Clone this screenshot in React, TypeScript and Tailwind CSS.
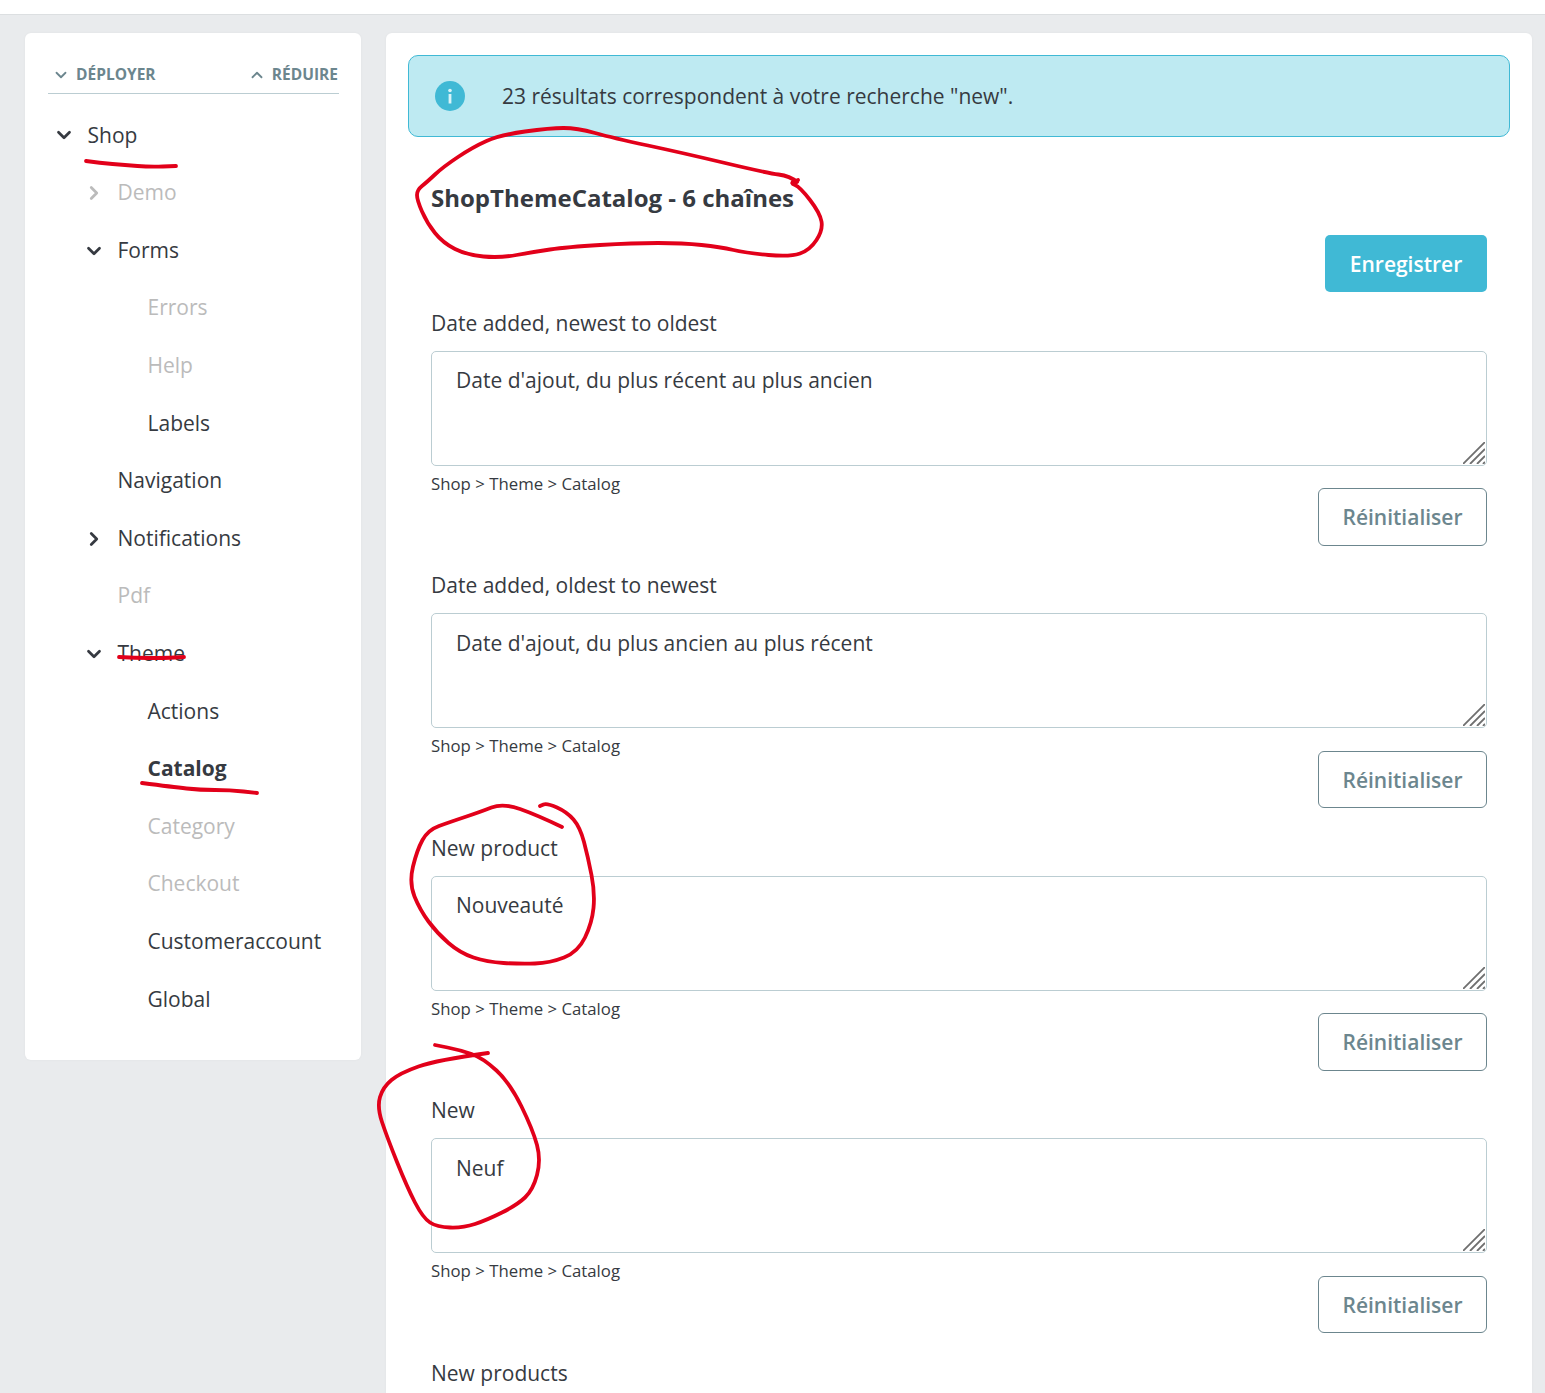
import React from 'react';
import { ChevronDown, ChevronRight, ChevronUp } from 'lucide-react';

type TreeItem = {
  label: string;
  indent: string;
  icon?: 'down' | 'right';
  muted?: boolean;
  active?: boolean;
};

const tree: TreeItem[] = [
  { label: 'Shop', indent: 'pl-0', icon: 'down' },
  { label: 'Demo', indent: 'pl-[30px]', icon: 'right', muted: true },
  { label: 'Forms', indent: 'pl-[30px]', icon: 'down' },
  { label: 'Errors', indent: 'pl-[60px]', muted: true },
  { label: 'Help', indent: 'pl-[60px]', muted: true },
  { label: 'Labels', indent: 'pl-[60px]' },
  { label: 'Navigation', indent: 'pl-[30px]' },
  { label: 'Notifications', indent: 'pl-[30px]', icon: 'right' },
  { label: 'Pdf', indent: 'pl-[30px]', muted: true },
  { label: 'Theme', indent: 'pl-[30px]', icon: 'down' },
  { label: 'Actions', indent: 'pl-[60px]' },
  { label: 'Catalog', indent: 'pl-[60px]', active: true },
  { label: 'Category', indent: 'pl-[60px]', muted: true },
  { label: 'Checkout', indent: 'pl-[60px]', muted: true },
  { label: 'Customeraccount', indent: 'pl-[60px]' },
  { label: 'Global', indent: 'pl-[60px]' },
];

const translations = [
  { label: 'Date added, newest to oldest', value: "Date d'ajout, du plus récent au plus ancien" },
  { label: 'Date added, oldest to newest', value: "Date d'ajout, du plus ancien au plus récent" },
  { label: 'New product', value: 'Nouveauté' },
  { label: 'New', value: 'Neuf' },
];

// pen marks drawn over the screenshot
const marks: [number, number][][] = [
  [[86, 161], [100, 163], [125, 165], [150, 167], [176, 166]],
  [[119, 657], [135, 658], [165, 658], [184, 657]],
  [[142, 783], [173, 787], [200, 790], [230, 790], [257, 793]],
  [
    [797, 182], [790, 176], [767, 173], [683, 153], [613, 138], [577, 128], [550, 128], [500, 135], [473, 147],
    [443, 167], [427, 182], [417, 190], [417, 200], [427, 223], [443, 243], [467, 255], [500, 258], [533, 252],
    [567, 247], [633, 243], [683, 243], [720, 247], [747, 253], [790, 257], [810, 250], [823, 230], [820, 213],
    [800, 187], [790, 183], [798, 180],
  ],
  [
    [562, 827], [537, 815], [503, 803], [480, 812], [450, 822], [428, 830], [417, 850], [409, 883], [420, 910],
    [437, 933], [460, 953], [487, 962], [520, 964], [550, 963], [578, 952], [592, 923], [595, 893], [588, 857],
    [580, 827], [567, 812], [547, 803], [540, 806],
  ],
  [
    [488, 1053], [437, 1060], [400, 1073], [383, 1087], [377, 1107], [387, 1137], [407, 1187], [423, 1218],
    [437, 1227], [463, 1228], [487, 1220], [517, 1205], [533, 1190], [541, 1160], [533, 1130], [510, 1083],
    [483, 1058], [460, 1050], [435, 1045],
  ],
];

const toPath = (pts: [number, number][]) => {
  let d = `M${pts[0][0]} ${pts[0][1]}`;
  for (let i = 1; i < pts.length - 1; i++) {
    const mx = (pts[i][0] + pts[i + 1][0]) / 2;
    const my = (pts[i][1] + pts[i + 1][1]) / 2;
    d += ` Q${pts[i][0]} ${pts[i][1]} ${mx} ${my}`;
  }
  const last = pts[pts.length - 1];
  return `${d} L${last[0]} ${last[1]}`;
};

const Sidebar = () => (
  <aside className="w-[336px] h-[1027px] shrink-0 bg-white rounded-[6px] pl-[23px] pr-[22px] pt-[24px] shadow-[0_0_3px_rgba(0,0,0,0.04)]">
    <div className="flex items-center justify-between h-[37px] border-b border-[#bbcdd2] pb-[1px] text-[#6c868e] text-[15.5px] font-bold uppercase">
      <div className="flex items-center">
        <ChevronDown className="w-[18px] h-[18px] ml-[4px] mr-[6px]" strokeWidth={2.4} />
        <span>Déployer</span>
      </div>
      <div className="flex items-center">
        <ChevronUp className="w-[18px] h-[18px] mr-[6px]" strokeWidth={2.4} />
        <span className="mr-px">Réduire</span>
      </div>
    </div>
    <ul className="mt-[12.6px]">
      {tree.map((item) => (
        <li key={item.label} className={`h-[57.6px] flex items-center ${item.indent}`}>
          <span className={`w-[39.5px] shrink-0 pl-[5px] ${item.muted ? 'text-[#bbbbbb]' : 'text-[#363a41]'}`}>
            {item.icon === 'down' && <ChevronDown className="w-[22px] h-[22px]" strokeWidth={3} />}
            {item.icon === 'right' && <ChevronRight className="w-[22px] h-[22px]" strokeWidth={3} />}
          </span>
          <span
            className={`text-[21px] ${item.muted ? 'text-[#bbbbbb]' : 'text-[#363a41]'} ${item.active ? 'font-bold' : ''}`}
          >
            {item.label}
          </span>
        </li>
      ))}
    </ul>
  </aside>
);

const TranslationField = ({ label, value }: { label: string; value: string }) => (
  <div className="mb-[25.5px]">
    <label className="block h-[28px] leading-[29px] text-[21px] text-[#363a41]">{label}</label>
    <div className="relative mt-[14px] h-[115px]">
      <textarea
        readOnly
        defaultValue={value}
        className="block w-full h-full resize-none rounded-[5px] border border-[#bbcdd2] bg-white px-[24px] py-[13.7px] text-[21px] leading-[30px] text-[#363a41] outline-none"
      />
      <svg className="absolute right-[2px] bottom-[2px] w-[22px] h-[22px]" viewBox="0 0 22 22" fill="none" stroke="#6f6f6f" strokeWidth="1.8">
        <path d="M0 22 L22 0 M7 22 L22 7 M14 22 L22 14 M20 22 L22 20" />
      </svg>
    </div>
    <div className="h-[22.5px] pt-[8px] leading-[20px] text-[16.8px] text-[#363a41]">Shop &gt; Theme &gt; Catalog</div>
    <div className="flex justify-end">
      <button className="w-[169px] h-[57.5px] pt-[2px] rounded-[6px] border border-[#6c868e] bg-white text-[21px] font-semibold text-[#6c868e]">
        Réinitialiser
      </button>
    </div>
  </div>
);

const App: React.FC = () => {
  return (
    <div className="relative h-[1393px] overflow-hidden bg-[#e9ebed] font-['Open_Sans',sans-serif]">
      <div className="h-[15px] bg-white border-b border-[#dcdfe1]" />
      <div className="flex items-start gap-[25px] pl-[25px] pr-[13px] pt-[18px]">
        <Sidebar />
        <main className="flex-1 h-[1400px] bg-white rounded-t-[6px] px-[22px] pt-[22px] shadow-[0_0_3px_rgba(0,0,0,0.04)]">
          <div className="flex items-center h-[82px] rounded-[10px] border border-[#40b9d5] bg-[#beeaf2] pl-[26px]">
            <svg className="w-[30px] h-[30px] shrink-0" viewBox="0 0 30 30">
              <circle cx="15" cy="15" r="15" fill="#40b9d5" />
              <circle cx="15" cy="9.5" r="1.8" fill="#d9f3f8" />
              <rect x="13.6" y="13" width="2.8" height="9.5" fill="#d9f3f8" />
            </svg>
            <p className="ml-[37px] mt-[1px] text-[21px] text-[#363a41]">23 résultats correspondent à votre recherche "new".</p>
          </div>
          <div className="px-[23px]">
            <h2 className="mt-[43px] h-[36px] leading-[36px] text-[24px] font-bold text-[#363a41]">
              ShopThemeCatalog - 6 chaînes
            </h2>
            <div className="flex justify-end mt-[19px]">
              <button className="w-[162px] h-[57px] pt-[2px] rounded-[5px] bg-[#40b9d5] text-[21px] font-semibold text-white">
                Enregistrer
              </button>
            </div>
            <div className="mt-[16.6px]">
              {translations.map((t) => (
                <TranslationField key={t.label} label={t.label} value={t.value} />
              ))}
              <label className="block h-[28px] leading-[29px] text-[21px] text-[#363a41]">New products</label>
            </div>
          </div>
        </main>
      </div>
      <svg className="absolute left-0 top-0 w-[1545px] h-[1393px] pointer-events-none" viewBox="0 0 1545 1393" fill="none">
        {marks.map((m, i) => (
          <path key={i} d={toPath(m)} stroke="#e2001a" strokeWidth="3.8" strokeLinecap="round" strokeLinejoin="round" />
        ))}
      </svg>
    </div>
  );
};

export default App;
